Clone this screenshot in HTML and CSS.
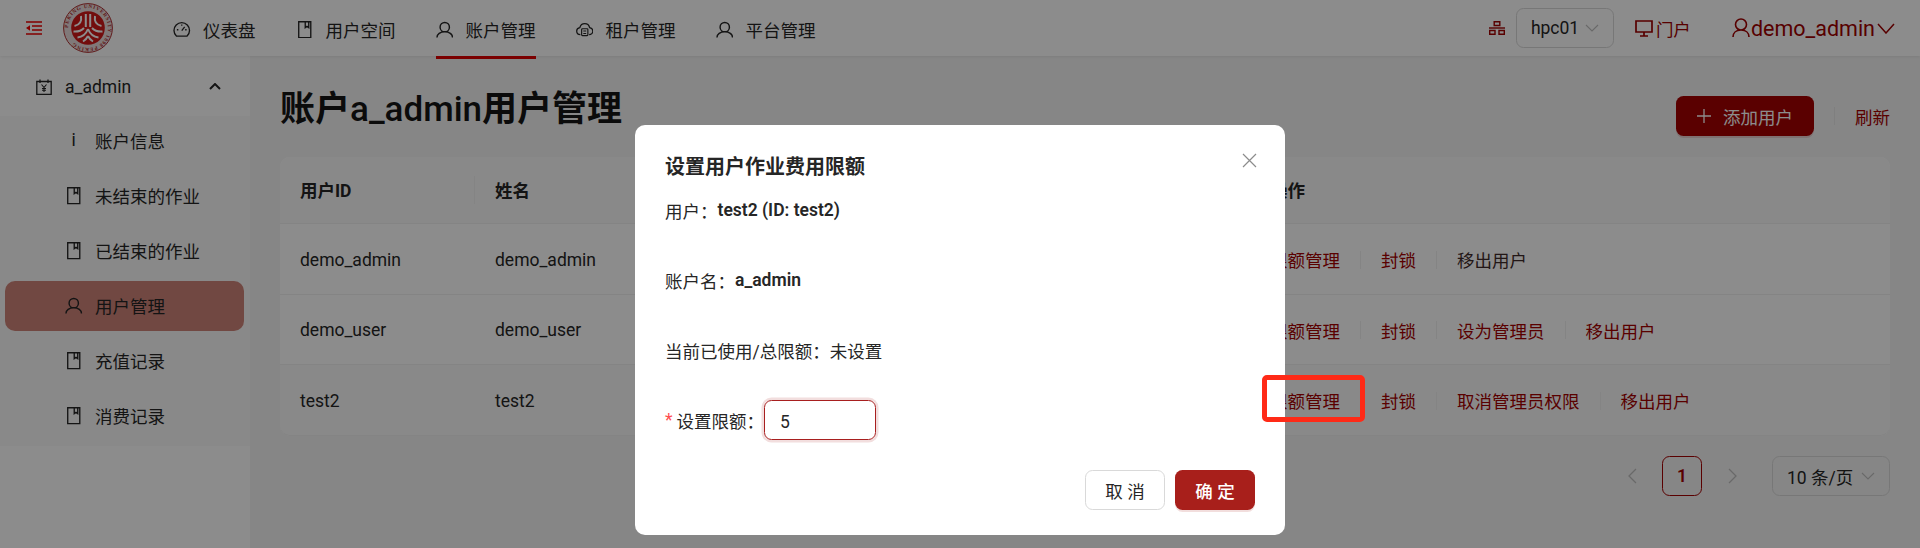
FILE: index.html
```html
<!DOCTYPE html>
<html lang="zh-CN">
<head>
<meta charset="utf-8">
<title>账户用户管理</title>
<link rel="stylesheet" href="styles.css">
</head>
<body>
<div class="app">
  <header class="topbar">
    <svg class="fold" viewBox="0 0 16 14"><path d="M0 1h16M6 5h10M6 9h10M0 13h16" fill="none" stroke="currentColor" stroke-width="1.400"/><path d="M0 7l4-2.800v5.600z" fill="currentColor"/></svg>
    <svg class="logo" viewBox="0 0 50 50">
      <circle cx="25" cy="25" r="24.400" fill="#eadcdc" stroke="#b03030" stroke-width="1"/>
      <defs><path id="ring" d="M25 25m-20 0a20 20 0 1 1 40 0a20 20 0 1 1 -40 0"/></defs>
      <text class="logo-ring"><textPath href="#ring">PEKING UNIVERSITY 1898 PEKING</textPath></text>
      <circle cx="25" cy="25" r="16.800" fill="#d01818"/>
      <path d="M22.800 11v13M27.200 11v13M18 13c1 6-2 9-6.500 10M32 13c-1 6 2 9 6.500 10M21 25c-3 3-6 4-10.500 3.500M29 25c3 3 6 4 10.500 3.500M25 26c-2 5-6 8-10.500 8.500M25 26c2 5 6 8 10.500 8.500M25 33c-1 2-2.500 4-5 5.500M25 33c1 2 2.500 4 5 5.500" fill="none" stroke="#fff" stroke-width="2"/>
    </svg>
    <nav class="nav">
      <a class="nav-item"><svg class="ico" viewBox="0 0 18 18"><path d="M3.500 15.500a8 8 0 1 1 11 0z" fill="none" stroke="currentColor" stroke-width="1.400"/><path d="M9 10l3-4M4 9h1.500M12.500 9H14M9 3.500V5" stroke="currentColor" stroke-width="1.300" fill="none"/></svg>仪表盘</a>
      <a class="nav-item"><svg class="ico" viewBox="0 0 18 18"><use href="#book"/></svg>用户空间</a>
      <a class="nav-item active"><svg class="ico" viewBox="0 0 18 18"><use href="#user"/></svg>账户管理</a>
      <a class="nav-item"><svg class="ico" viewBox="0 0 18 18"><path d="M4.500 14C2.300 14 .7 12.300.7 10.300S2 7 4 6.700C4.600 4.200 6.500 2.700 9 2.700s4.400 1.500 5 4c2 .3 3.300 1.600 3.300 3.600s-1.600 3.700-3.800 3.700" fill="none" stroke="currentColor" stroke-width="1.300"/><rect x="5.800" y="8" width="6.400" height="7" rx=".8" fill="none" stroke="currentColor" stroke-width="1.200"/><path d="M7.500 10.300h3M7.500 12.800h3" stroke="currentColor" stroke-width="1.100"/></svg>租户管理</a>
      <a class="nav-item"><svg class="ico" viewBox="0 0 18 18"><use href="#user"/></svg>平台管理</a>
    </nav>
    <div class="top-right">
      <svg class="cluster" viewBox="0 0 16 14"><path d="M5.200.700h5.600v3.800H5.200zM.700 9.500h5.300v3.800H.700zM10 9.500h5.300v3.800H10z" fill="none" stroke="currentColor" stroke-width="1.400"/><path d="M0 7h16" stroke="currentColor" stroke-width="1.400"/></svg>
      <div class="select cluster-select"><span>hpc01</span><svg class="chev" viewBox="0 0 14 8"><path d="M1 1l6 6 6-6" fill="none" stroke="currentColor" stroke-width="1.100"/></svg></div>
      <a class="portal"><svg class="monitor" viewBox="0 0 18 17"><path d="M1 1h16v11H1zM9 12v4M5 16h8" fill="none" stroke="currentColor" stroke-width="1.700"/></svg>门户</a>
      <a class="account"><svg class="acct-ico" viewBox="0 0 18 20"><path d="M9 1a5.500 5.500 0 1 1 0 11 5.500 5.500 0 0 1 0-11zM1 19c0-4 3-7 8-7s8 3 8 7" fill="none" stroke="currentColor" stroke-width="1.600"/></svg>demo_admin<svg class="acct-chev" viewBox="0 0 18 11"><path d="M1 1l8 9 8-9" fill="none" stroke="currentColor" stroke-width="1.500"/></svg></a>
    </div>
  </header>

  <div class="body">
    <aside class="sider">
      <div class="menu-root"><svg class="menu-ico" viewBox="0 0 16 16"><path d="M.800 2.500h14.400v13H.800zM4 .500v3.500M12 .500v3.500" fill="none" stroke="currentColor" stroke-width="1.300"/><path d="M5.500 5.500L8 8.500l2.500-3M8 8.500V13M6 9.500h4M6 11.200h4" fill="none" stroke="currentColor" stroke-width="1.100"/></svg><span class="menu-label">a_admin</span><svg class="menu-up" viewBox="0 0 12 7"><path d="M1 6l5-5 5 5" fill="none" stroke="currentColor" stroke-width="2"/></svg></div>
      <div class="submenu">
        <a class="sub-item"><span class="sub-info">i</span>账户信息</a>
        <a class="sub-item"><svg class="sub-ico" viewBox="0 0 18 18"><use href="#book"/></svg>未结束的作业</a>
        <a class="sub-item"><svg class="sub-ico" viewBox="0 0 18 18"><use href="#book"/></svg>已结束的作业</a>
        <a class="sub-item selected"><svg class="sub-ico" viewBox="0 0 18 18"><use href="#user"/></svg>用户管理</a>
        <a class="sub-item"><svg class="sub-ico" viewBox="0 0 18 18"><use href="#book"/></svg>充值记录</a>
        <a class="sub-item"><svg class="sub-ico" viewBox="0 0 18 18"><use href="#book"/></svg>消费记录</a>
      </div>
    </aside>
    <main class="content">
      <div class="page-head">
        <h1 class="page-title">账户<span class="title-latin">a_admin</span>用户管理</h1>
        <div class="head-actions">
          <button class="btn-add"><svg class="plus" viewBox="0 0 14 14"><path d="M7 0v14M0 7h14" stroke="currentColor" stroke-width="1.300"/></svg>添加用户</button>
          <i class="vsep"></i>
          <a class="link">刷新</a>
        </div>
      </div>
      <div class="table">
        <div class="row row-head">
          <div class="cell c-id">用户ID</div>
          <div class="cell c-name">姓名</div>
          <div class="cell c-act">操作</div>
        </div>
        <div class="row">
          <div class="cell c-id">demo_admin</div>
          <div class="cell c-name">demo_admin</div>
          <div class="cell c-act"><a class="link">限额管理</a><i class="sep"></i><a class="link">封锁</a><i class="sep"></i><a class="link-dark">移出用户</a></div>
        </div>
        <div class="row">
          <div class="cell c-id">demo_user</div>
          <div class="cell c-name">demo_user</div>
          <div class="cell c-act"><a class="link">限额管理</a><i class="sep"></i><a class="link">封锁</a><i class="sep"></i><a class="link">设为管理员</a><i class="sep"></i><a class="link">移出用户</a></div>
        </div>
        <div class="row row-hover">
          <div class="cell c-id">test2</div>
          <div class="cell c-name">test2</div>
          <div class="cell c-act"><a class="link">限额管理</a><i class="sep"></i><a class="link">封锁</a><i class="sep"></i><a class="link">取消管理员权限</a><i class="sep"></i><a class="link">移出用户</a></div>
        </div>
      </div>
      <div class="pager">
        <span class="pg-arrow"><svg viewBox="0 0 9 16"><path d="M8 1L1 8l7 7" fill="none" stroke="currentColor" stroke-width="1.300"/></svg></span>
        <span class="pg-num">1</span>
        <span class="pg-arrow"><svg viewBox="0 0 9 16"><path d="M1 1l7 7-7 7" fill="none" stroke="currentColor" stroke-width="1.300"/></svg></span>
        <div class="select size-select"><span>10 条/页</span><svg class="chev" viewBox="0 0 14 8"><path d="M1 1l6 6 6-6" fill="none" stroke="currentColor" stroke-width="1.100"/></svg></div>
      </div>
    </main>
  </div>
</div>

<div class="mask">
  <section class="modal">
    <svg class="close" viewBox="0 0 15 15"><path d="M1 1l13 13M14 1L1 14" fill="none" stroke="currentColor" stroke-width="1.200"/></svg>
    <h2 class="modal-title">设置用户作业费用限额</h2>
    <div class="form-row">用户：<strong>test2 (ID: test2)</strong></div>
    <div class="form-row">账户名：<strong>a_admin</strong></div>
    <div class="form-row">当前已使用/总限额：未设置</div>
    <div class="form-row"><span class="req">*</span>设置限额：<span class="input"><span class="input-val">5</span></span></div>
    <div class="modal-foot">
      <button class="btn btn-cancel">取 消</button>
      <button class="btn btn-ok">确 定</button>
    </div>
  </section>
</div>
<div class="callout"></div>

<svg class="defs" width="0" height="0">
  <symbol id="book" viewBox="0 0 18 18"><path d="M2.800.800h12.400v16.400H2.800zM9.500.800v6l1.800-1.300 1.800 1.300v-6" fill="none" stroke="currentColor" stroke-width="1.400"/></symbol>
  <symbol id="user" viewBox="0 0 18 18"><path d="M9 1.500a4.800 4.800 0 1 1 0 9.600 4.800 4.800 0 0 1 0-9.600zM1 17c0-3.500 3.400-5.900 8-5.900s8 2.400 8 5.900" fill="none" stroke="currentColor" stroke-width="1.500"/></symbol>
</svg>
</body>
</html>
```

FILE: styles.css
```css
* { box-sizing: border-box; }
html, body { margin: 0; height: 100%; overflow: hidden; }
body {
  font-family: Roboto, "Noto Sans CJK SC", sans-serif;
  font-size: 17.5px;
  color: #262626;
  background: #f5f5f5;
}
a { color: inherit; text-decoration: none; }
.defs { position: absolute; }

.app { height: 100vh; display: flex; flex-direction: column; }

.topbar {
  position: relative;
  z-index: 2;
  flex: none;
  height: 56px;
  display: flex;
  align-items: center;
  padding-left: 26px;
  background: #fff;
  box-shadow: 0 1px 3px rgba(0,0,0,.08);
}
.fold { width: 16px; height: 14px; color: #f00000; }
.logo { width: 50px; height: 50px; margin-left: 21px; }
.logo-ring { font: 700 5.200px "Liberation Serif", serif; fill: #b03030; letter-spacing: .75px; }
.nav { display: flex; gap: 40px; margin-left: 60px; height: 100%; }
.nav-item { position: relative; display: flex; align-items: center; gap: 12.500px; padding-top: 3px; }
.nav-item.active::after {
  content: "";
  position: absolute;
  left: 0; right: 0; top: 56px;
  height: 2.500px;
  background: #e00000;
}
.ico { width: 17.500px; height: 17.500px; flex: none; }

.top-right { margin-left: auto; display: flex; align-items: center; padding-right: 25px; color: #a00000; }
.cluster { width: 16px; height: 14px; }
.select {
  display: flex;
  align-items: center;
  height: 40px;
  border: 1px solid #d9d9d9;
  border-radius: 7.500px;
  color: #262626;
}
.chev { width: 14px; height: 8px; color: #bfbfbf; }
.cluster-select { width: 98px; margin-left: 11px; padding: 0 14px; justify-content: space-between; }
.portal { display: flex; align-items: center; gap: 3px; margin-left: 21px; }
.monitor { width: 18px; height: 17px; }
.account { display: flex; align-items: center; margin-left: 41px; font-size: 21.500px; }
.acct-ico { width: 18px; height: 20px; margin-right: 1px; }
.acct-chev { width: 18px; height: 11px; margin-left: 2px; }

.body { flex: 1; min-height: 0; display: flex; }
.sider { flex: none; width: 250px; background: #fff; }
.menu-root {
  height: 50px;
  margin: 5px;
  display: flex;
  align-items: center;
  padding: 1px 24px 0 31px;
}
.menu-ico { width: 16px; height: 16px; flex: none; }
.menu-label { margin-left: 13px; flex: 1; }
.menu-up { width: 12px; height: 7px; }
.submenu { background: #fafafa; padding-bottom: 5px; }
.sub-item {
  height: 50px;
  margin: 0 6px 5px 5px;
  display: flex;
  align-items: center;
  gap: 12.500px;
  padding: 0 0 2px 60px;
  border-radius: 10px;
}
.sub-item:last-child { margin-bottom: 0; }
.sub-item.selected { background: #ce8378; }
.sub-ico { width: 17.500px; height: 17.500px; flex: none; margin-top: 2px; }
.sub-info { width: 17.500px; text-align: center; }

.content { flex: 1; min-width: 0; padding: 30px 30px 0; }
.page-head { display: flex; justify-content: space-between; align-items: flex-end; height: 50px; margin-bottom: 21px; }
.page-title { margin: 0; font-size: 35px; line-height: 48px; font-weight: 700; color: #141414; align-self: flex-start; }
.title-latin { font-weight: 500; }
.head-actions { display: flex; align-items: center; }
.btn-add {
  display: flex;
  align-items: center;
  justify-content: center;
  gap: 12px;
  width: 138px;
  height: 40px;
  padding: 0;
  border: 0;
  border-radius: 7.500px;
  background: #a40000;
  color: #fff;
  font: inherit;
  box-shadow: 0 2px 0 rgba(164,0,0,.15);
}
.plus { width: 14px; height: 14px; }
.vsep { width: 1px; height: 18px; margin: 0 20px; background: #e8e8e8; }
.link { color: #a40000; }
.link-dark { color: #3f2a2a; }

.table { background: #fff; border-radius: 10px; }
.row { display: grid; grid-template-columns: 195px 775px 1fr; align-items: center; height: 70.500px; border-bottom: 1px solid #f0f0f0; padding-top: 2px; }
.row-head { height: 67px; background: #fafafa; font-weight: 700; border-radius: 10px 10px 0 0; padding-top: 0; padding-bottom: 1px; }
.row-hover { background: #fafafa; border-radius: 0 0 10px 10px; }
.cell { padding: 0 20px; display: flex; align-items: center; }
.row-head .c-id { border-right: 1px solid #f0f0f0; height: 28px; }
.sep { width: 1px; height: 18px; margin: 0 20px; background: #f0f0f0; }

.pager { display: flex; justify-content: flex-end; align-items: center; gap: 10px; margin-top: 20.500px; }
.pg-arrow { width: 40px; height: 40px; display: flex; align-items: center; justify-content: center; color: #bfbfbf; }
.pg-arrow svg { width: 9px; height: 16px; }
.pg-num {
  width: 40px; height: 40px;
  display: flex; align-items: center; justify-content: center;
  border: 1px solid #a40000;
  border-radius: 7.500px;
  color: #a40000;
  font-weight: 600;
}
.size-select { width: 118px; margin-left: 10px; padding: 0 14px; justify-content: space-between; }

.mask { position: fixed; inset: 0; z-index: 10; background: rgba(0,0,0,.45); }
.modal {
  position: relative;
  width: 650px;
  margin: 125px auto 0;
  padding: 25px 30px;
  background: #fff;
  border-radius: 10px;
  color: #262626;
}
.close { position: absolute; right: 28px; top: 28px; width: 15px; height: 15px; color: #8c8c8c; }
.modal-title { margin: 0 0 6px; font-size: 20px; line-height: 34px; font-weight: 700; color: #262626; }
.form-row { display: flex; align-items: center; height: 40px; margin-bottom: 30px; white-space: pre; }
.form-row strong { font-weight: 600; }
.req { color: #ff4d4f; width: 11.500px; }
.input {
  display: flex;
  align-items: center;
  width: 112px;
  height: 40px;
  padding-left: 15px;
  border: 1px solid #a81f1f;
  border-radius: 7.500px;
  box-shadow: 0 0 0 2.500px rgba(168,31,31,.15);
}
.input-val { padding-top: 3px; }
.modal-foot { display: flex; justify-content: flex-end; gap: 10px; }
.btn {
  width: 80px;
  height: 40px;
  border-radius: 7.500px;
  font: inherit;
  padding: 0;
}
.btn-cancel { background: #fff; border: 1px solid #d9d9d9; color: #262626; }
.btn-ok { background: #a81f1b; border: 0; color: #fff; font-weight: 500; box-shadow: 0 2px 0 rgba(168,31,27,.15); }

.callout {
  position: fixed;
  z-index: 20;
  left: 1262px;
  top: 375px;
  width: 103px;
  height: 47px;
  border: 5px solid #ff2a17;
  border-radius: 5px;
}
```
